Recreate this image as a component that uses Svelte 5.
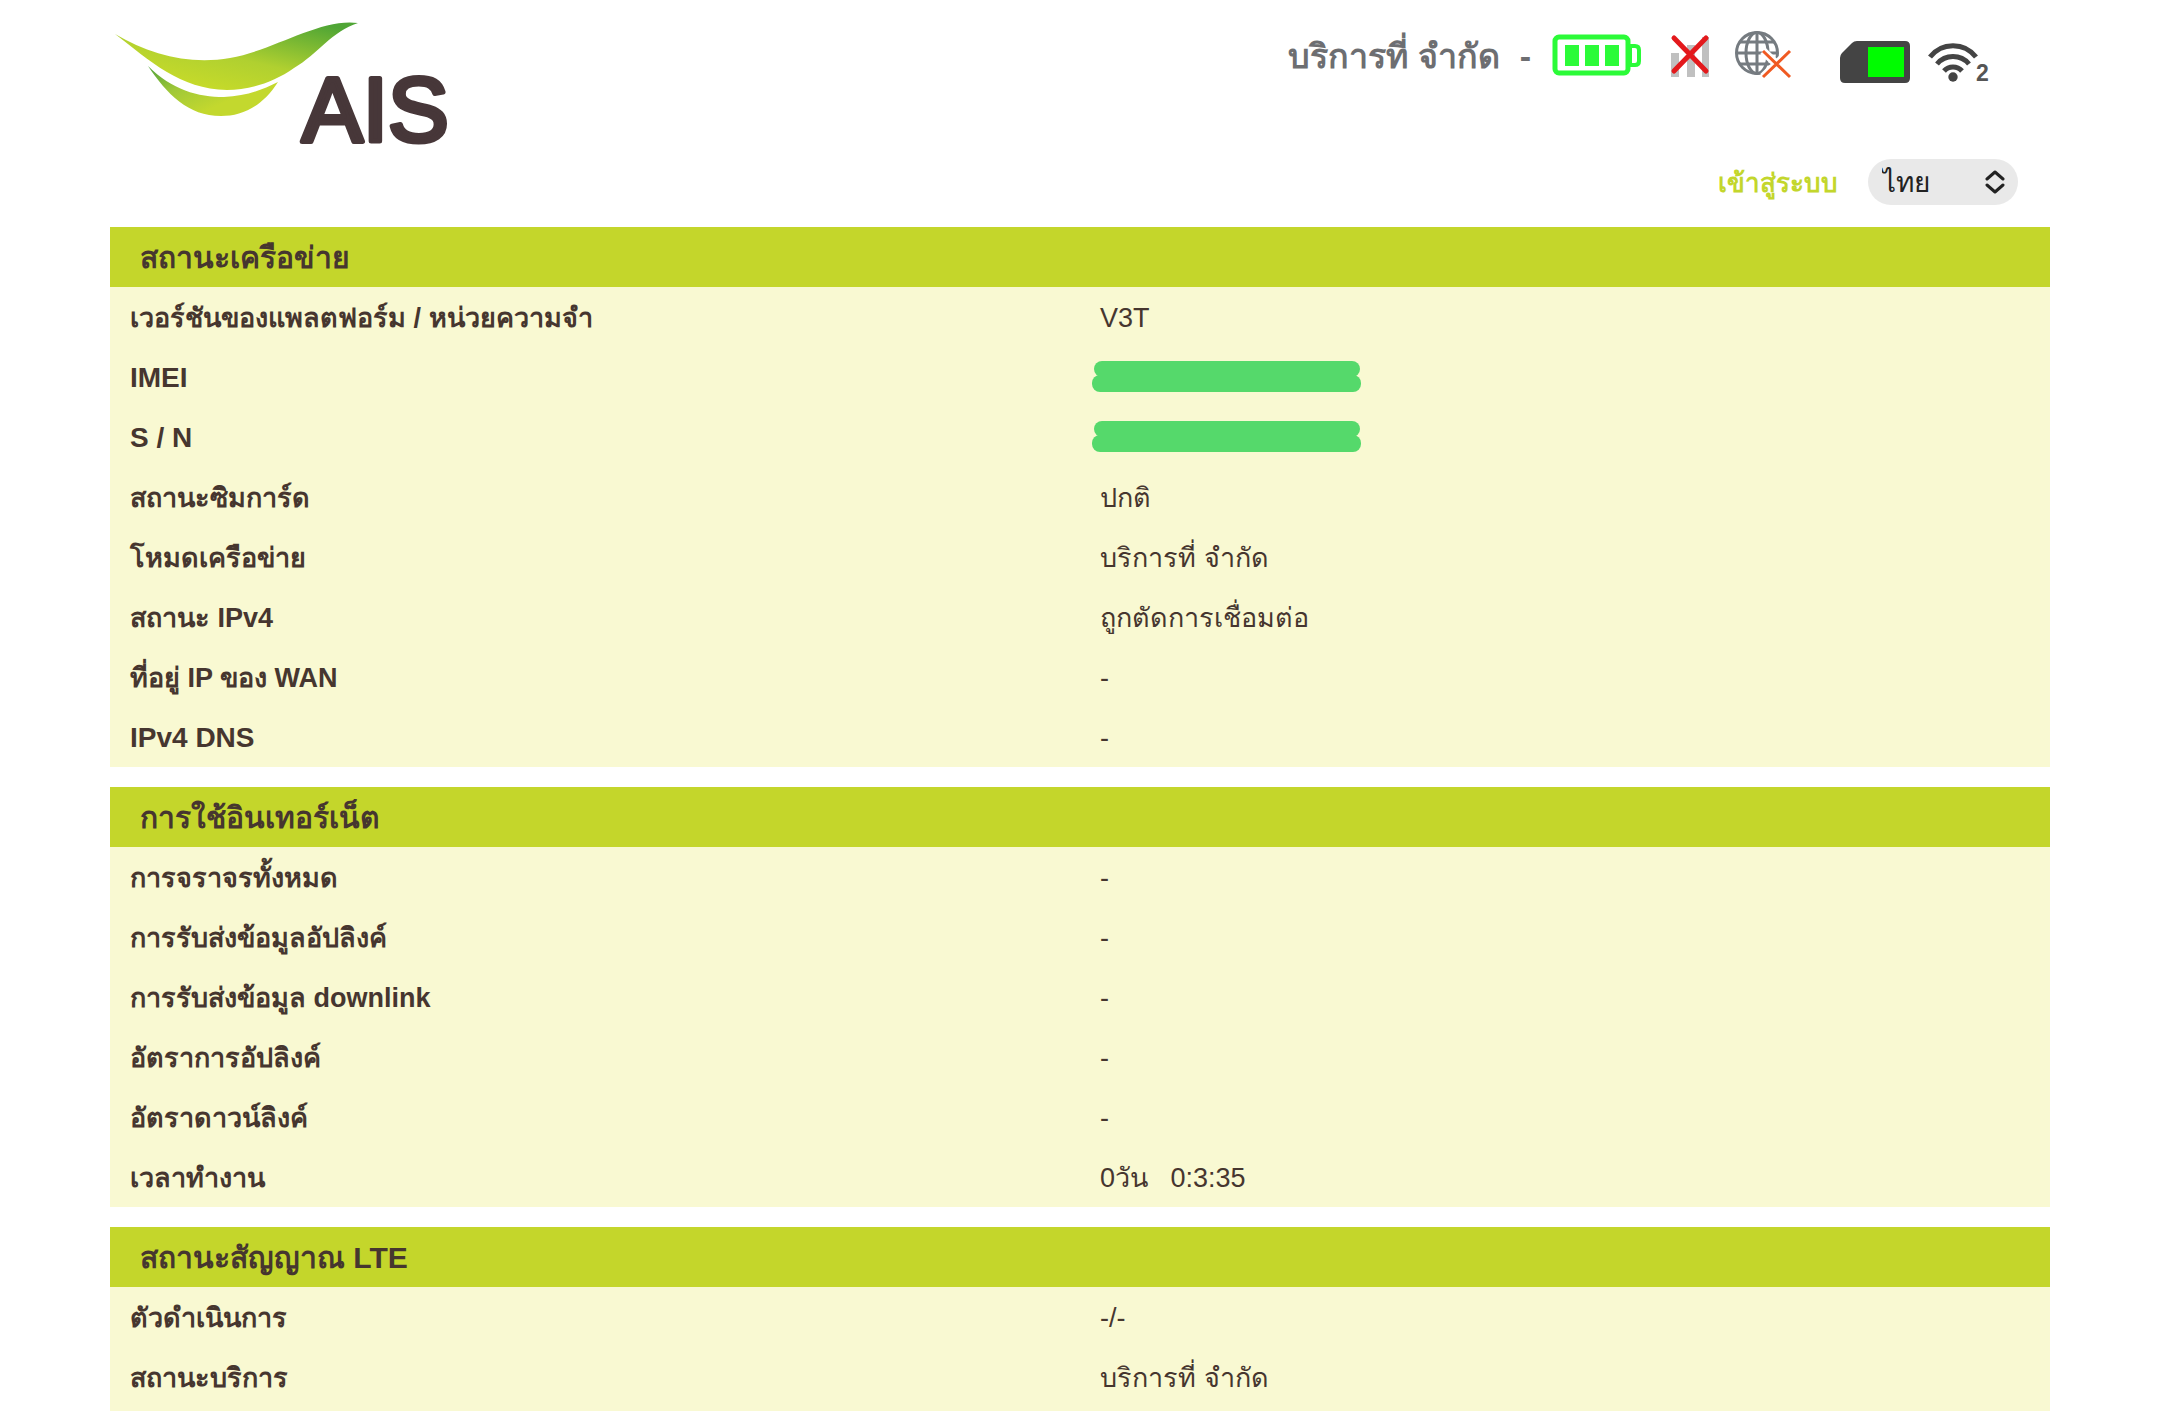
<script lang="ts">
	interface Row {
		label: string;
		value: string;
		hidden?: boolean;
	}

	interface Panel {
		title: string;
		rows: Row[];
	}

	const serviceStatus = "บริการที่ จำกัด";
	const connectedClients = 2;

	let language = $state("th");

	const panels: Panel[] = [
		{
			title: "สถานะเครือข่าย",
			rows: [
				{ label: "เวอร์ชันของแพลตฟอร์ม / หน่วยความจำ", value: "V3T" },
				{ label: "IMEI", value: "", hidden: true },
				{ label: "S / N", value: "", hidden: true },
				{ label: "สถานะซิมการ์ด", value: "ปกติ" },
				{ label: "โหมดเครือข่าย", value: "บริการที่ จำกัด" },
				{ label: "สถานะ IPv4", value: "ถูกตัดการเชื่อมต่อ" },
				{ label: "ที่อยู่ IP ของ WAN", value: "-" },
				{ label: "IPv4 DNS", value: "-" }
			]
		},
		{
			title: "การใช้อินเทอร์เน็ต",
			rows: [
				{ label: "การจราจรทั้งหมด", value: "-" },
				{ label: "การรับส่งข้อมูลอัปลิงค์", value: "-" },
				{ label: "การรับส่งข้อมูล downlink", value: "-" },
				{ label: "อัตราการอัปลิงค์", value: "-" },
				{ label: "อัตราดาวน์ลิงค์", value: "-" },
				{ label: "เวลาทำงาน", value: "0วัน\u00a0\u00a0 0:3:35" }
			]
		},
		{
			title: "สถานะสัญญาณ LTE",
			rows: [
				{ label: "ตัวดำเนินการ", value: "-/-" },
				{ label: "สถานะบริการ", value: "บริการที่ จำกัด" }
			]
		}
	];

	/**
	 * Thai labels are set one size smaller than the Latin ones
	 */
	function isThai(text: string) {
		return /[\u0e00-\u0e7f]/.test(text);
	}
</script>

<div class="page">
	<header>
		<svg class="logo" viewBox="10 0 350 160" role="img" aria-label="AIS">
			<defs>
				<linearGradient id="leaf-top" x1="0.3" y1="0.9" x2="0.95" y2="0.1">
					<stop offset="0" stop-color="#c5da2a" />
					<stop offset="0.4" stop-color="#b0d030" />
					<stop offset="1" stop-color="#4fa535" />
				</linearGradient>
				<linearGradient id="leaf-bottom" x1="0" y1="0" x2="0.7" y2="0.6">
					<stop offset="0" stop-color="#4fa03a" />
					<stop offset="0.5" stop-color="#a0c838" />
					<stop offset="1" stop-color="#c3d82e" />
				</linearGradient>
			</defs>
			<path
				fill="url(#leaf-top)"
				d="M15 34C50 55 90 65 130 58C175 50 220 18 258 23C232 31 218 54 194 68C173 83 148 90 127 90C80 89 50 61 15 34Z"
			/>
			<path
				fill="url(#leaf-bottom)"
				d="M48 66C72 90 98 97 124 97C146 96 162 90 178 82C162 107 142 116 121 116C88 116 67 94 48 66Z"
			/>
			<text class="wordmark" x="202" y="141">AIS</text>
		</svg>

		<div class="tools">
			<div class="status">
				<span class="service">{serviceStatus}</span>
				<span class="service">-</span>
				<div class="icons">
					<svg width="94" height="60" viewBox="0 0 94 60" role="img" aria-label="Battery">
						<rect x="4" y="12" width="73" height="36" rx="4" fill="none" stroke="#2bfb38" stroke-width="5" />
						<path d="M79 21h5q4 0 4 4v11q0 4-4 4h-5z" fill="none" stroke="#2bfb38" stroke-width="4" />
						<path d="M14 20h14v21h-14zM34 20h14v21h-14zM54 20h14v21h-14z" fill="#2bfb38" />
					</svg>
					<svg width="42" height="60" viewBox="0 0 42 60" role="img" aria-label="No signal">
						<path d="M2 28h8v24h-8zM18 20h8v32h-8zM33 12h7v40h-7z" fill="#c0c0c0" />
						<path d="M5 13l32 33M37 13l-32 33" stroke="#e3191c" stroke-width="5" stroke-linecap="round" />
					</svg>
					<svg width="57" height="60" viewBox="0 0 57 60" role="img" aria-label="No internet">
						<g fill="none" stroke="#757b80" stroke-width="3">
							<circle cx="22" cy="28" r="20.5" />
							<ellipse cx="22" cy="28" rx="11" ry="20.5" />
							<path d="M22 7v42M1 28h42M5 17h34M5 39h34" />
						</g>
						<path d="M28 26l27 26M55 26l-27 26" stroke="#fff" stroke-width="8" />
						<path d="M28 26l27 26M55 26l-27 26" stroke="#f05a22" stroke-width="3" />
					</svg>
				</div>
				<div class="icons close">
					<svg width="71" height="60" viewBox="0 0 71 60" role="img" aria-label="SIM card">
						<path d="M17 16H65q5 0 5 5V53q0 5-5 5H5q-5 0-5-5V33q0-3 2-5L12 18q2-2 5-2z" fill="#444" />
						<rect x="28" y="22" width="36" height="30" fill="#00fc00" />
					</svg>
					<svg width="66" height="60" viewBox="0 0 66 60" role="img" aria-label="Wi-Fi clients">
						<g fill="none" stroke="#444" stroke-width="5">
							<path d="M3 32A29 29 0 0 1 49 32" />
							<path d="M10 39A21 21 0 0 1 42 39" />
							<path d="M17 46A12 12 0 0 1 35 46" />
						</g>
						<circle cx="26" cy="52" r="4.7" fill="#444" />
						<text class="clients" x="49" y="56">{connectedClients}</text>
					</svg>
				</div>
			</div>

			<div class="account">
				<a href="#login">เข้าสู่ระบบ</a>
				<div class="language">
					<select aria-label="Language" bind:value={language}>
						<option value="th">ไทย</option>
					</select>
					<svg width="20" height="24" viewBox="0 0 20 24" aria-hidden="true">
						<path d="M2 9l8-7l8 7M2 15l8 7l8-7" />
					</svg>
				</div>
			</div>
		</div>
	</header>

	<main>
		{#each panels as panel}
			<section>
				<h2>{panel.title}</h2>
				<table aria-label={panel.title}>
					<tbody>
						{#each panel.rows as row}
							<tr>
								<th scope="row" class:thai={isThai(row.label)}>{row.label}</th>
								<td>
									{#if row.hidden}
										<svg class="redaction" width="270" height="31" viewBox="0 0 270 31" role="img" aria-label="Hidden">
											<rect x="2" y="0" width="266" height="16" rx="8" />
											<rect x="0" y="14" width="269" height="17" rx="8" />
											<rect x="6" y="4" width="258" height="20" />
										</svg>
									{:else}
										{row.value}
									{/if}
								</td>
							</tr>
						{/each}
					</tbody>
				</table>
			</section>
		{/each}
	</main>
</div>

<style>
	:global(body) {
		margin: 0;
		background: #fff;
	}

	.page {
		display: flex;
		flex-direction: column;
		min-height: 100vh;
		box-sizing: border-box;
		padding: 0 110px;
		font-family: "Liberation Sans", Arial, sans-serif;
		font-size: 28px;
		color: #46362f;
	}

	header {
		display: flex;
		justify-content: space-between;
		align-items: flex-start;
		height: 227px;
	}

	.logo {
		width: 350px;
		height: 160px;
	}

	.wordmark {
		font-size: 91px;
		fill: #473739;
		stroke: #473739;
		stroke-width: 5px;
		stroke-linejoin: round;
	}

	.tools {
		display: flex;
		flex-direction: column;
		align-items: flex-end;
		gap: 74px;
		padding-top: 25px;
	}

	.status {
		display: flex;
		align-items: center;
		height: 60px;
		padding-right: 57px;
	}

	.service {
		margin-right: 20px;
		padding-top: 2px;
		font-size: 34px;
		font-weight: 700;
		line-height: 60px;
		color: #6d6e71;
	}

	.icons {
		display: flex;
		gap: 24px;
		margin-right: 48px;
	}

	.icons.close {
		gap: 16px;
		margin-right: 0;
	}

	.clients {
		font-size: 23px;
		font-weight: 700;
		fill: #555;
	}

	.account {
		display: flex;
		align-items: center;
		gap: 30px;
		padding-right: 32px;
	}

	a {
		font-size: 26px;
		font-weight: 700;
		color: #c3d62c;
		text-decoration: none;
	}

	.language {
		position: relative;
	}

	select {
		display: block;
		appearance: none;
		width: 150px;
		height: 46px;
		padding: 0 14px;
		border: none;
		border-radius: 23px;
		background: #e9e9e9;
		font: inherit;
		color: #222;
	}

	.language svg {
		position: absolute;
		top: 11px;
		right: 13px;
		fill: none;
		stroke: #222;
		stroke-width: 3px;
		stroke-linecap: round;
		stroke-linejoin: round;
		pointer-events: none;
	}

	main {
		display: flex;
		flex: 1;
		flex-direction: column;
		gap: 20px;
	}

	section {
		background: #f9f9d2;
	}

	section:last-child {
		flex: 1;
	}

	h2 {
		margin: 0;
		padding: 2px 30px 0;
		background: #c4d62b;
		font-size: 30px;
		font-weight: 700;
		line-height: 58px;
	}

	table {
		width: 100%;
		table-layout: fixed;
		border-collapse: collapse;
	}

	th,
	td {
		box-sizing: border-box;
		height: 60px;
		padding: 2px 20px 0;
		line-height: 40px;
		text-align: left;
	}

	td,
	.thai {
		font-size: 27px;
	}

	.redaction {
		display: block;
		margin: 0 0 4px -8px;
		fill: #55d96b;
	}
</style>
